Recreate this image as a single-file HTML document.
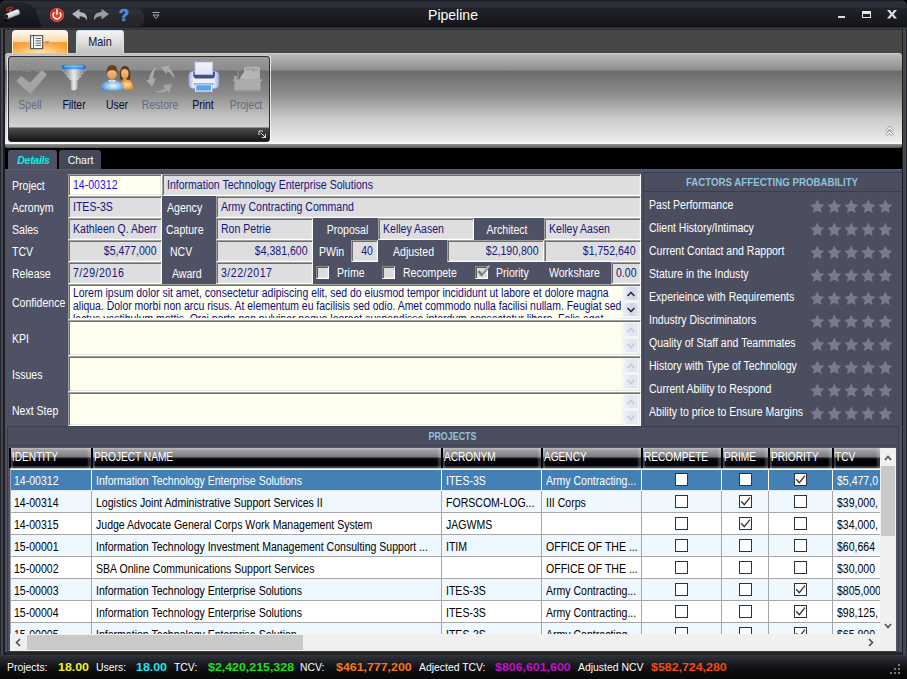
<!DOCTYPE html><html><head><meta charset="utf-8"><title>Pipeline</title><style>
*{margin:0;padding:0;box-sizing:border-box}
html,body{width:907px;height:679px;overflow:hidden;background:#000}
body{position:relative;font-family:"Liberation Sans",sans-serif;font-size:12.5px;letter-spacing:0;color:#fff;line-height:13px}
.a{position:absolute}
.t{position:absolute;white-space:pre;line-height:13px;height:13px;transform:scaleX(.843);transform-origin:0 50%}
.t.ce{transform-origin:50% 50%}
.x{display:inline-block;white-space:pre;transform:scaleX(.843);transform-origin:0 50%}
.r .x{transform-origin:100% 50%}
.f{position:absolute;background:#dedede;border:1px solid;border-color:#a0a0a0 #fff #fff #a0a0a0;box-shadow:inset 1px 1px 0 #6e6e6e,inset -1px -1px 0 #e6e6e6;color:#15157c;white-space:pre;overflow:hidden;line-height:13px;padding:4px 0 0 4px}
.f.r{text-align:right;padding-right:4px}
.iv{background:#fffff0}
.cb{position:absolute;width:13px;height:13px;background:#dcdcdc;border:1px solid;border-color:#8a8a8a #fff #fff #8a8a8a;box-shadow:inset 1px 1px 0 #5a5a5a,inset -1px -1px 0 #e6e6e6}
.b{font-weight:bold}
.hd{position:absolute;color:#8ec3dd;font-weight:bold;font-size:11px;letter-spacing:0;transform-origin:50% 50%;text-align:center;white-space:pre}
.row{position:absolute;left:10px;width:870px;height:22px}
.c{position:absolute;top:0;height:22px;border-right:1px solid #a6a6a6;border-bottom:1px solid #a6a6a6;color:#000;white-space:pre;overflow:hidden;padding:6px 0 0 4px;line-height:13px}
.sel .c{color:#fff;border-right-color:#fff;border-bottom-color:#dfe8f0;border-top:1px solid #fff}
.sel .c{padding-top:5px}
.sel .gc{top:3px}
.gc{position:absolute;width:13px;height:13px;border:1px solid #333;background:#fff;top:4px}
.hc{position:absolute;top:448px;height:20px;color:#fff;font-size:12px;padding:2.6px 0 0 1px;white-space:pre;overflow:hidden;line-height:13px;
 background:linear-gradient(#b8b8bc 0,#9c9c9e 3px,#7e7e7e 8.5px,#14141c 10.5px,#02020a 12px,#04040e 17.5px,#30323c 18.5px,#3a3c46 20px);border-left:2px solid #000;box-shadow:inset 2px 0 1px rgba(255,255,255,.22),inset -3px 0 2px rgba(255,255,255,.2)}
.sb{font-weight:bold;font-size:11px;transform:scaleX(1.125);transform-origin:0 50%}
.sl{font-size:11px;transform:scaleX(.946);transform-origin:0 50%}
</style></head><body>
<div class="a" style="left:0;top:0;width:907px;height:679px;background:#1e1e22;border-radius:6px 6px 4px 4px"></div>
<div class="a" style="left:0;top:0;width:907px;height:30px;background:linear-gradient(#13141b 0,#262834 1px,#2e303a 2px,#2b2d36 7.5px,#222329 8.5px,#1b1c22 17px,#141519 27px,#3e404a 28.3px,#2c2d33 29.3px,#3a3a3c 30px);border-radius:6px 6px 0 0"></div>
<svg class="a" style="left:0;top:0" width="170" height="29" viewBox="0 0 170 29"><defs><linearGradient id="pl" x1="0" y1="0" x2="0" y2="1"><stop offset="0" stop-color="#2f3037"/><stop offset="1" stop-color="#222328"/></linearGradient><linearGradient id="ab" x1="0" y1="0" x2="0" y2="1"><stop offset="0" stop-color="#23242c"/><stop offset="1" stop-color="#131418"/></linearGradient><linearGradient id="pp" x1="0" y1="0" x2="0" y2="1"><stop offset="0" stop-color="#ffffff"/><stop offset="1" stop-color="#b8bcc4"/></linearGradient><radialGradient id="pw" cx=".5" cy=".5" r=".5"><stop offset="0" stop-color="#e8503a"/><stop offset="1" stop-color="#c8200c"/></radialGradient></defs><path d="M36 8.5 H135 A9.5 9.5 0 0 1 135 27.5 H36 Z" fill="url(#pl)"/><path d="M1 2.5 H24 C36 3 38 20 43 27.5 H1 Z" fill="url(#ab)"/><g transform="rotate(-22 12 14)"><rect x="4.5" y="11.5" width="15.5" height="5.6" rx="2.2" fill="url(#pp)" stroke="#55585f" stroke-width=".5"/><ellipse cx="6" cy="14.3" rx="1.6" ry="2.2" fill="#1a1a1e"/><rect x="11" y="8.8" width="1.4" height="3" fill="#999"/><ellipse cx="11.7" cy="8.3" rx="3.4" ry="1.3" fill="none" stroke="#b42a20" stroke-width="1.1"/></g><circle cx="6" cy="20.3" r="1.5" fill="#050506"/><circle cx="57" cy="15" r="7.2" fill="url(#pw)"/><circle cx="57" cy="15" r="6.6" fill="none" stroke="#f29a86" stroke-width=".6" opacity=".7"/><path d="M54.3 12.2 A3.9 3.9 0 1 0 59.7 12.2" fill="none" stroke="#fff" stroke-width="1.5"/><path d="M57 9.3 V14.6" stroke="#fff" stroke-width="1.6"/><path d="M72 14 L79.5 9 V12 C85 12 87.5 15.5 87 20.5 C85.5 17.5 83.5 16.3 79.5 16.3 V19.5 Z" fill="#b4b6bc"/><path d="M109 14 L101.5 9 V12 C96 12 93.500 15.5 94 20.5 C95.5 17.5 97.5 16.3 101.5 16.3 V19.5 Z" fill="#9a9ca3"/><path d="M152.500 12.500 H159.500" stroke="#a8a8b0" stroke-width="1"/><path d="M153 15 L156 18.500 L159 15 Z" fill="none" stroke="#a8a8b0" stroke-width="1"/></svg>
<div class="a b" style="left:117px;top:5px;width:14px;text-align:center;font-size:16.5px;line-height:20px;color:#3f86e6;letter-spacing:0;text-shadow:0 0 1px #b8d8ff">?</div>
<div class="a" style="left:0;top:6px;width:906px;text-align:center;font-size:15px;letter-spacing:0;line-height:17px;color:#fff;transform:scaleX(.935)">Pipeline</div>
<div class="a" style="left:838px;top:15.5px;width:7px;height:2.5px;background:#dcdce8"></div>
<div class="a" style="left:862px;top:11px;width:9px;height:7px;border:1px solid #e8e8e8;border-top-width:3px"></div>
<svg class="a" style="left:886.6px;top:9.600px" width="10" height="9" viewBox="0 0 10 9"><path d="M0 0 H3 L5 2.800 L7 0 H10 L6.600 4.300 L10 8.600 H7 L5 5.800 L3 8.600 H0 L3.400 4.300 Z" fill="#dcdce4"/></svg>
<div class="a" style="left:5px;top:30px;width:897px;height:116px;background:#474747"></div>
<div class="a" style="left:12px;top:30px;width:56px;height:23px;border-radius:4px 4px 0 0;background:radial-gradient(ellipse 60% 55% at 50% 100%,rgba(255,236,196,.85),rgba(255,236,196,0) 100%),linear-gradient(#fffaf3 0,#fdead2 5px,#fbd8ac 10.5px,#f9a23e 11px,#f8992c 15px,#fbb040 23px);border:1px solid #fff3e2;border-bottom:0"></div>
<svg class="a" style="left:30px;top:35px" width="22" height="15" viewBox="0 0 22 15"><rect x="0.6" y="0.6" width="12" height="13" fill="#fff" stroke="#5a5a5a" stroke-width="1.2"/><path d="M3.600 1V13.500" stroke="#5a5a5a" stroke-width="1"/><path d="M5.500 3.500H11M5.500 5.800H11M5.500 8.100H11M5.500 10.400H11" stroke="#5a5a5a" stroke-width="1"/><path d="M14.300 6.300 H19.700 L17 9.300 Z" fill="#a39880"/></svg>
<div class="a" style="left:76px;top:30px;width:48px;height:24px;border-radius:3px 3px 0 0;background:linear-gradient(#f4f4f4,#d8d8d8 60%,#bdbdbd);border:1px solid #cfe4ee;border-bottom:0"></div>
<div class="t" style="left:76px;top:36px;width:48px;text-align:center;color:#10103c;font-size:12.6px;transform:scaleX(.86);transform-origin:50% 50%">Main</div>
<div class="a" style="left:5px;top:53px;width:897px;height:95px;border-radius:3px;background:linear-gradient(#d2d2d2 0,#b9b9b9 2px,#8e8e8e 17px,#6c6c6c 18px,#8a8a8a 40px,#c9c9c9 65px,#ececec 88px,#fafafa 90.5px,#8c8c8c 91.5px,#585858 95px)"></div>
<div class="a" style="left:7px;top:55px;width:264px;height:89px;border-radius:4px;border:1.5px solid rgba(255,255,255,.75);border-top-color:rgba(255,255,255,.25)"></div>
<div class="a" style="left:8px;top:56px;width:262px;height:86px;border-radius:3px;border:1px solid #2e2e2e;background:linear-gradient(#9a9a9a 0,#8c8c8c 13px,#6e6e6e 14px,#8a8a8a 36px,#c4c4c4 60px,#d4d4d4 70px,#4c4c4c 71px,#151515 84px)"></div>
<svg class="a" style="left:258px;top:130px" width="9" height="9" viewBox="0 0 9 9"><path d="M1 5V1H5" fill="none" stroke="#ddd" stroke-width="1"/><path d="M3 3L7.5 7.5M7.5 4V7.5H4" fill="none" stroke="#ddd" stroke-width="1"/></svg>
<svg class="a" style="left:885px;top:126px" width="9" height="11" viewBox="0 0 9 11"><path d="M1 5L4.5 1.5L8 5M1 9.5L4.5 6L8 9.5" fill="none" stroke="#666" stroke-width="2.4"/><path d="M1 5L4.5 1.5L8 5M1 9.5L4.5 6L8 9.5" fill="none" stroke="#fff" stroke-width="1.5"/></svg>
<div class="t" style="left:0px;top:99px;width:60px;text-align:center;color:#666a80;font-size:12.6px;transform:scaleX(.83);transform-origin:50% 50%">Spell</div>
<div class="t" style="left:44px;top:99px;width:60px;text-align:center;color:#08082c;font-size:12.6px;transform:scaleX(.83);transform-origin:50% 50%">Filter</div>
<div class="t" style="left:87px;top:99px;width:60px;text-align:center;color:#08082c;font-size:12.6px;transform:scaleX(.83);transform-origin:50% 50%">User</div>
<div class="t" style="left:130px;top:99px;width:60px;text-align:center;color:#666a80;font-size:12.6px;transform:scaleX(.83);transform-origin:50% 50%">Restore</div>
<div class="t" style="left:173px;top:99px;width:60px;text-align:center;color:#08082c;font-size:12.6px;transform:scaleX(.83);transform-origin:50% 50%">Print</div>
<div class="t" style="left:216px;top:99px;width:60px;text-align:center;color:#666a80;font-size:12.6px;transform:scaleX(.83);transform-origin:50% 50%">Project</div>
<svg class="a" style="left:10px;top:58px" width="40" height="40" viewBox="0 0 40 40"><text x="6.300" y="13.800" font-family="Liberation Sans, sans-serif" font-size="12.300" fill="#8b8b8b" opacity=".8">ABC</text><path d="M6.200 23.200 L11.200 17.900 L20 24.700 L32 11.800 L37 16.500 L20.300 35.900 Z" fill="#a4a4a4"/></svg>
<svg class="a" style="left:54px;top:58px" width="40" height="40" viewBox="0 0 40 40"><defs><linearGradient id="fg" x1="0" x2="1"><stop offset="0" stop-color="#7a7a7a"/><stop offset=".25" stop-color="#a8a8a8"/><stop offset=".5" stop-color="#ececec"/><stop offset=".75" stop-color="#a8a8a8"/><stop offset="1" stop-color="#7a7a7a"/></linearGradient><linearGradient id="fs" x1="0" x2="1"><stop offset="0" stop-color="#a4a4a4"/><stop offset=".45" stop-color="#f0f0f0"/><stop offset="1" stop-color="#b0b0b0"/></linearGradient><linearGradient id="fb" x1="0" x2="1"><stop offset="0" stop-color="#1e6fd0"/><stop offset=".5" stop-color="#48acf2"/><stop offset="1" stop-color="#1e6fd0"/></linearGradient></defs><path d="M7.800 10.500 H32 L23.500 22.600 H16.800 Z" fill="url(#fg)"/><path d="M8 11.500 L16.500 22.300 M31.800 11.500 L23.700 22.300" stroke="#fff" stroke-width=".7" stroke-dasharray="2.500 1.500" opacity=".8"/><path d="M16.800 22 H23.500 V31 L20 32.600 L16.800 31.800 Z" fill="url(#fs)"/><rect x="7.600" y="6.800" width="24.400" height="4.400" rx="2.200" fill="url(#fb)"/><rect x="10" y="7.600" width="19.500" height="1.600" rx=".8" fill="#7cc8fa" opacity=".7"/></svg>
<svg class="a" style="left:97px;top:58px" width="40" height="40" viewBox="0 0 40 40"><defs><radialGradient id="ub" cx=".55" cy=".55" r=".6"><stop offset="0" stop-color="#eef8ff"/><stop offset=".45" stop-color="#a4d0f0"/><stop offset="1" stop-color="#3f88d6"/></radialGradient><radialGradient id="uo" cx=".55" cy=".5" r=".6"><stop offset="0" stop-color="#fff4e0"/><stop offset=".45" stop-color="#f8b860"/><stop offset="1" stop-color="#e8841a"/></radialGradient><linearGradient id="sk" x1="0" y1="0" x2="0" y2="1"><stop offset="0" stop-color="#f6c890"/><stop offset="1" stop-color="#e09848"/></linearGradient></defs><path d="M23 31.500 C22.500 25 25 21.800 29.500 21.800 C34 21.800 36.300 25 35.900 31.500 Z" fill="url(#uo)"/><path d="M23 21.600 C22.200 14 23.500 8 28 8 C32.500 8 33.800 14 33 21.600 Z" fill="#5e3418"/><rect x="26.300" y="19" width="3.200" height="3.600" fill="#e09848"/><ellipse cx="27.800" cy="15.800" rx="3.800" ry="5" fill="url(#sk)"/><path d="M24 13.500 C25 10.500 30.500 10.500 32 13.500 C30 11.800 26 11.800 24 13.500Z" fill="#c89050"/><path d="M4.100 32.600 C3.600 25.500 7 22 15 22 C23 22 26.600 25.500 26.200 32.600 Z" fill="url(#ub)"/><path d="M11.300 22 H18.800 L17.800 23.800 H12.300 Z" fill="#f4f8fc"/><rect x="12.800" y="18.500" width="4.400" height="4" fill="#d88c40"/><ellipse cx="15" cy="15.800" rx="4.800" ry="5.400" fill="url(#sk)"/><path d="M9.900 15.500 C9 9 12 6.800 15.500 7 C19.500 7 21 10.500 20 15.500 C19 12.800 17.500 12 15 12.300 C12.500 12 11 13 9.900 15.500Z" fill="#6a4220"/></svg>
<svg class="a" style="left:140px;top:58px" width="40" height="40" viewBox="0 0 40 40"><g fill="#b0b0b0" opacity=".88"><path d="M16.500 8.800 C12.500 11.500 9.500 16 9 21.800 L6.200 22.400 L12.400 28.800 L15.900 20.300 L13.300 20.900 C13.300 16.500 14.500 12.500 16.500 8.800 Z"/><path d="M20.900 9.400 L30 7 L28.800 9.800 C32.500 13 34.500 17 34.700 21.800 C33 18 30.500 15 27.600 13.300 L26.500 15.900 Z"/><path d="M14.100 32.400 C18 33.500 22 33 25 30.500 L22.900 27.100 L31.800 25.900 L29.400 34.700 L27.300 32.800 C23.500 35.500 18 35 14.100 32.400 Z" opacity=".85"/></g></svg>
<svg class="a" style="left:183px;top:58px" width="40" height="40" viewBox="0 0 40 40"><defs><linearGradient id="pg" x1="0" x2="1"><stop offset="0" stop-color="#a4b6e2"/><stop offset=".18" stop-color="#eef1f9"/><stop offset=".82" stop-color="#eef1f9"/><stop offset="1" stop-color="#9cb0e0"/></linearGradient><linearGradient id="pt" x1="0" y1="0" x2="0" y2="1"><stop offset="0" stop-color="#f2f4fb"/><stop offset="1" stop-color="#dfe5f5"/></linearGradient></defs><rect x="5.900" y="13.200" width="30" height="17.400" rx="4.500" fill="url(#pg)" stroke="#8ea4dc" stroke-width=".6"/><path d="M10.300 13.800 H32 V17.500 C32 19.500 30.500 20.600 28.500 20.600 H13.800 C11.800 20.600 10.300 19.500 10.300 17.500 Z" fill="#484c88"/><rect x="12" y="4.100" width="17.700" height="12.400" fill="url(#pt)" stroke="#b4c2ea" stroke-width=".8"/><rect x="11" y="25.600" width="19.400" height="1" fill="#484c88"/><rect x="12" y="26.200" width="17.400" height="7.600" fill="#fff" stroke="#8ea4dc" stroke-width=".5"/><rect x="13.200" y="27.200" width="15" height="5.400" fill="#56a6ea"/></svg>
<svg class="a" style="left:226px;top:58px" width="40" height="40" viewBox="0 0 40 40"><rect x="18" y="8.800" width="16" height="13" rx="1.800" fill="#b4b4b4"/><rect x="19.600" y="10.400" width="12.800" height="10" fill="#a0a0a0"/><path d="M24 20 L30 11.500 L32 13 V20 Z" fill="#b2b2b2"/><path d="M13.800 21.500 C15 17 19 12 23 11.800 C27 12 30 17 31 21.500 Z" fill="#b6b6b6"/><rect x="11.300" y="11.800" width="1.400" height="10" fill="#8e8e8e"/><rect x="8.300" y="18" width="2.400" height="3.500" fill="#acacac"/><path d="M7 21.200 H36 V23 H34.600 V32 H8.400 V23 H7 Z" fill="#ababab"/><rect x="8.400" y="32" width="26.200" height="1.600" fill="#a0a0a0" opacity=".6"/></svg>
<div class="a" style="left:5px;top:148px;width:897px;height:21px;background:#000"></div>
<div class="a" style="left:8px;top:150px;width:49px;height:21px;background:#4f5264;border-radius:3px 3px 0 0"></div>
<div class="a" style="left:59px;top:150px;width:42px;height:19px;background:#444756;border-radius:3px 3px 0 0"></div>
<div class="t" style="left:9px;top:153.500px;width:49px;text-align:center;color:#00f2ec;font-weight:bold;font-style:italic;font-size:10.5px;letter-spacing:-0.3px;transform:none">Details</div>
<div class="t" style="left:59px;top:153.600px;width:43px;text-align:center;color:#fff;font-size:10.5px;letter-spacing:0;transform:none">Chart</div>
<div class="a" style="left:5px;top:169px;width:897px;height:484px;background:#4f5264;border-top:1px solid #585b6e"></div>
<div class="t" style="left:12px;top:180px;">Project</div>
<div class="t" style="left:12px;top:202px;">Acronym</div>
<div class="t" style="left:12px;top:224px;">Sales</div>
<div class="t" style="left:12px;top:246px;">TCV</div>
<div class="t" style="left:12px;top:268px;">Release</div>
<div class="f iv" style="left:68px;top:174px;width:94px;height:22px;color:#1818f0"><span class="x">14-00312</span></div>
<div class="f " style="left:162px;top:174px;width:479px;height:22px;"><span class="x">Information Technology Enterprise Solutions</span></div>
<div class="f " style="left:68px;top:196px;width:94px;height:22px;"><span class="x">ITES-3S</span></div>
<div class="t" style="left:167px;top:202px;">Agency</div>
<div class="f " style="left:216px;top:196px;width:425px;height:22px;"><span class="x">Army Contracting Command</span></div>
<div class="f " style="left:68px;top:218px;width:94px;height:22px;"><span class="x">Kathleen Q. Aberr</span></div>
<div class="t" style="left:166px;top:224px;">Capture</div>
<div class="f " style="left:216px;top:218px;width:97px;height:22px;"><span class="x">Ron Petrie</span></div>
<div class="t ce" style="left:315px;top:223.5px;width:65px;text-align:center;">Proposal</div>
<div class="f " style="left:378px;top:218px;width:96px;height:22px;"><span class="x">Kelley Aasen</span></div>
<div class="t ce" style="left:472px;top:223.5px;width:70px;text-align:center;">Architect</div>
<div class="f " style="left:544px;top:218px;width:97px;height:22px;"><span class="x">Kelley Aasen</span></div>
<div class="f r" style="left:68px;top:240px;width:94px;height:22px;"><span class="x">$5,477,000</span></div>
<div class="t" style="left:170px;top:246px;">NCV</div>
<div class="f r" style="left:216px;top:240px;width:97px;height:22px;"><span class="x">$4,381,600</span></div>
<div class="t" style="left:319px;top:246px;">PWin</div>
<div class="f r" style="left:351px;top:240px;width:27px;height:22px;"><span class="x">40</span></div>
<div class="t ce" style="left:379px;top:246.4px;width:69px;text-align:center;">Adjusted</div>
<div class="f r" style="left:447px;top:240px;width:97px;height:22px;"><span class="x">$2,190,800</span></div>
<div class="f r" style="left:544px;top:240px;width:97px;height:22px;"><span class="x">$1,752,640</span></div>
<div class="f " style="left:68px;top:262px;width:94px;height:22px;letter-spacing:.6px"><span class="x">7/29/2016</span></div>
<div class="t" style="left:172px;top:268px;">Award</div>
<div class="f " style="left:216px;top:262px;width:97px;height:22px;letter-spacing:.6px"><span class="x">3/22/2017</span></div>
<div class="cb" style="left:316px;top:266px"></div>
<div class="t" style="left:337px;top:267px;">Prime</div>
<div class="cb" style="left:382px;top:266px"></div>
<div class="t" style="left:403px;top:267px;">Recompete</div>
<div class="cb" style="left:475px;top:266px"></div>
<svg class="a" style="left:476px;top:264px" width="16" height="14" viewBox="0 0 16 14"><path d="M2.500 7 L5.500 10.800 L12.500 3" fill="none" stroke="#7a7a7a" stroke-width="2.6"/><path d="M6 9 L13.500 1.500" stroke="#c4c4c4" stroke-width="1.2"/></svg>
<div class="t" style="left:496px;top:267px;">Priority</div>
<div class="t" style="left:549px;top:267.4px;">Workshare</div>
<div class="f " style="left:611px;top:262px;width:30px;height:22px;"><span class="x">0.00</span></div>
<div class="t" style="left:12px;top:297px;">Confidence</div>
<div class="f iv" style="left:68px;top:284px;width:573px;height:36px;color:#0c0c80;padding:2px 0 0 4px"><span class="x" style="transform:scaleX(.836)">Lorem ipsum dolor sit amet, consectetur adipiscing elit, sed do eiusmod tempor incididunt ut labore et dolore magna
aliqua. Dolor morbi non arcu risus. At elementum eu facilisis sed odio. Amet commodo nulla facilisi nullam. Feugiat sed
lectus vestibulum mattis. Orci porta non pulvinar neque laoreet suspendisse interdum consectetur libero. Felis eget</span></div>
<div class="a" style="left:70px;top:318px;width:552px;height:1px;background:#fbfbea"></div>
<div class="a" style="left:622px;top:286px;width:17px;height:32px;background:#f4f5ee"></div>
<div class="a" style="left:623px;top:286px;width:15.5px;height:15px;background:linear-gradient(90deg,#e9edf6,#cdd6e7 55%,#dde3ef);border:1px solid #f2f4f9;border-radius:2px"></div>
<svg class="a" style="left:626px;top:291px" width="10" height="6" viewBox="0 0 10 6"><path d="M1.500 5L5 1.500L8.500 5" fill="none" stroke="#202020" stroke-width="1.4"/></svg>
<div class="a" style="left:623px;top:302px;width:15.5px;height:15px;background:linear-gradient(90deg,#e9edf6,#cdd6e7 55%,#dde3ef);border:1px solid #f2f4f9;border-radius:2px"></div>
<svg class="a" style="left:626px;top:307px" width="10" height="6" viewBox="0 0 10 6"><path d="M1.500 1L5 4.500L8.500 1" fill="none" stroke="#202020" stroke-width="1.4"/></svg>
<div class="t" style="left:12px;top:333px;">KPI</div>
<div class="f iv" style="left:68px;top:320px;width:573px;height:36px;color:#0c0c80;padding:2px 0 0 4px"><span class="x" style="transform:scaleX(.836)"></span></div>
<div class="a" style="left:622px;top:322px;width:17px;height:32px;background:#f4f5ee"></div>
<div class="a" style="left:623px;top:322px;width:15.5px;height:15px;background:linear-gradient(90deg,#eef0f6,#dfe4ee 55%,#e8ebf2);border:1px solid #f5f6f8;border-radius:2px"></div>
<svg class="a" style="left:626px;top:327px" width="10" height="6" viewBox="0 0 10 6"><path d="M1.500 5L5 1.500L8.500 5" fill="none" stroke="#c2c8d6" stroke-width="1.4"/></svg>
<div class="a" style="left:623px;top:338px;width:15.5px;height:15px;background:linear-gradient(90deg,#eef0f6,#dfe4ee 55%,#e8ebf2);border:1px solid #f5f6f8;border-radius:2px"></div>
<svg class="a" style="left:626px;top:343px" width="10" height="6" viewBox="0 0 10 6"><path d="M1.500 1L5 4.500L8.500 1" fill="none" stroke="#c2c8d6" stroke-width="1.4"/></svg>
<div class="t" style="left:12px;top:369px;">Issues</div>
<div class="f iv" style="left:68px;top:356px;width:573px;height:36px;color:#0c0c80;padding:2px 0 0 4px"><span class="x" style="transform:scaleX(.836)"></span></div>
<div class="a" style="left:622px;top:358px;width:17px;height:32px;background:#f4f5ee"></div>
<div class="a" style="left:623px;top:358px;width:15.5px;height:15px;background:linear-gradient(90deg,#eef0f6,#dfe4ee 55%,#e8ebf2);border:1px solid #f5f6f8;border-radius:2px"></div>
<svg class="a" style="left:626px;top:363px" width="10" height="6" viewBox="0 0 10 6"><path d="M1.500 5L5 1.500L8.500 5" fill="none" stroke="#c2c8d6" stroke-width="1.4"/></svg>
<div class="a" style="left:623px;top:374px;width:15.5px;height:15px;background:linear-gradient(90deg,#eef0f6,#dfe4ee 55%,#e8ebf2);border:1px solid #f5f6f8;border-radius:2px"></div>
<svg class="a" style="left:626px;top:379px" width="10" height="6" viewBox="0 0 10 6"><path d="M1.500 1L5 4.500L8.500 1" fill="none" stroke="#c2c8d6" stroke-width="1.4"/></svg>
<div class="t" style="left:12px;top:405px;">Next Step</div>
<div class="f iv" style="left:68px;top:392px;width:573px;height:34px;color:#0c0c80;padding:2px 0 0 4px"><span class="x" style="transform:scaleX(.836)"></span></div>
<div class="a" style="left:622px;top:394px;width:17px;height:30px;background:#f4f5ee"></div>
<div class="a" style="left:623px;top:394px;width:15.5px;height:15px;background:linear-gradient(90deg,#eef0f6,#dfe4ee 55%,#e8ebf2);border:1px solid #f5f6f8;border-radius:2px"></div>
<svg class="a" style="left:626px;top:399px" width="10" height="6" viewBox="0 0 10 6"><path d="M1.500 5L5 1.500L8.500 5" fill="none" stroke="#c2c8d6" stroke-width="1.4"/></svg>
<div class="a" style="left:623px;top:410px;width:15.5px;height:15px;background:linear-gradient(90deg,#eef0f6,#dfe4ee 55%,#e8ebf2);border:1px solid #f5f6f8;border-radius:2px"></div>
<svg class="a" style="left:626px;top:415px" width="10" height="6" viewBox="0 0 10 6"><path d="M1.500 1L5 4.500L8.500 1" fill="none" stroke="#c2c8d6" stroke-width="1.4"/></svg>
<div class="a" style="left:643px;top:172px;width:259px;height:254px;background:#4b4e5f;border-left:1px solid #3b3e4c;border-top:1px solid #3b3e4c"></div>
<div class="a" style="left:644px;top:191px;width:257px;height:1px;background:#3b3e4c"></div>
<div class="hd" style="left:645px;top:176px;width:254px;line-height:13px;transform:scaleX(.88)">FACTORS AFFECTING PROBABILITY</div>
<div class="t" style="left:649px;top:199px;">Past Performance</div>
<svg class="a" style="left:810.1px;top:199.0px" width="14.6" height="14.6" viewBox="0 0 14 14"><path d="M7 0.5 L9.1 4.9 L13.7 5.5 L10.3 8.8 L11.2 13.4 L7 11.2 L2.8 13.4 L3.7 8.8 L0.3 5.5 L4.9 4.9 Z" fill="#797b86"/></svg>
<svg class="a" style="left:827.1px;top:199.0px" width="14.6" height="14.6" viewBox="0 0 14 14"><path d="M7 0.5 L9.1 4.9 L13.7 5.5 L10.3 8.8 L11.2 13.4 L7 11.2 L2.8 13.4 L3.7 8.8 L0.3 5.5 L4.9 4.9 Z" fill="#797b86"/></svg>
<svg class="a" style="left:844.1px;top:199.0px" width="14.6" height="14.6" viewBox="0 0 14 14"><path d="M7 0.5 L9.1 4.9 L13.7 5.5 L10.3 8.8 L11.2 13.4 L7 11.2 L2.8 13.4 L3.7 8.8 L0.3 5.5 L4.9 4.9 Z" fill="#797b86"/></svg>
<svg class="a" style="left:861.1px;top:199.0px" width="14.6" height="14.6" viewBox="0 0 14 14"><path d="M7 0.5 L9.1 4.9 L13.7 5.5 L10.3 8.8 L11.2 13.4 L7 11.2 L2.8 13.4 L3.7 8.8 L0.3 5.5 L4.9 4.9 Z" fill="#797b86"/></svg>
<svg class="a" style="left:878.1px;top:199.0px" width="14.6" height="14.6" viewBox="0 0 14 14"><path d="M7 0.5 L9.1 4.9 L13.7 5.5 L10.3 8.8 L11.2 13.4 L7 11.2 L2.8 13.4 L3.7 8.8 L0.3 5.5 L4.9 4.9 Z" fill="#797b86"/></svg>
<div class="t" style="left:649px;top:222px;">Client History/Intimacy</div>
<svg class="a" style="left:810.1px;top:222.0px" width="14.6" height="14.6" viewBox="0 0 14 14"><path d="M7 0.5 L9.1 4.9 L13.7 5.5 L10.3 8.8 L11.2 13.4 L7 11.2 L2.8 13.4 L3.7 8.8 L0.3 5.5 L4.9 4.9 Z" fill="#797b86"/></svg>
<svg class="a" style="left:827.1px;top:222.0px" width="14.6" height="14.6" viewBox="0 0 14 14"><path d="M7 0.5 L9.1 4.9 L13.7 5.5 L10.3 8.8 L11.2 13.4 L7 11.2 L2.8 13.4 L3.7 8.8 L0.3 5.5 L4.9 4.9 Z" fill="#797b86"/></svg>
<svg class="a" style="left:844.1px;top:222.0px" width="14.6" height="14.6" viewBox="0 0 14 14"><path d="M7 0.5 L9.1 4.9 L13.7 5.5 L10.3 8.8 L11.2 13.4 L7 11.2 L2.8 13.4 L3.7 8.8 L0.3 5.5 L4.9 4.9 Z" fill="#797b86"/></svg>
<svg class="a" style="left:861.1px;top:222.0px" width="14.6" height="14.6" viewBox="0 0 14 14"><path d="M7 0.5 L9.1 4.9 L13.7 5.5 L10.3 8.8 L11.2 13.4 L7 11.2 L2.8 13.4 L3.7 8.8 L0.3 5.5 L4.9 4.9 Z" fill="#797b86"/></svg>
<svg class="a" style="left:878.1px;top:222.0px" width="14.6" height="14.6" viewBox="0 0 14 14"><path d="M7 0.5 L9.1 4.9 L13.7 5.5 L10.3 8.8 L11.2 13.4 L7 11.2 L2.8 13.4 L3.7 8.8 L0.3 5.5 L4.9 4.9 Z" fill="#797b86"/></svg>
<div class="t" style="left:649px;top:245px;">Current Contact and Rapport</div>
<svg class="a" style="left:810.1px;top:245.0px" width="14.6" height="14.6" viewBox="0 0 14 14"><path d="M7 0.5 L9.1 4.9 L13.7 5.5 L10.3 8.8 L11.2 13.4 L7 11.2 L2.8 13.4 L3.7 8.8 L0.3 5.5 L4.9 4.9 Z" fill="#797b86"/></svg>
<svg class="a" style="left:827.1px;top:245.0px" width="14.6" height="14.6" viewBox="0 0 14 14"><path d="M7 0.5 L9.1 4.9 L13.7 5.5 L10.3 8.8 L11.2 13.4 L7 11.2 L2.8 13.4 L3.7 8.8 L0.3 5.5 L4.9 4.9 Z" fill="#797b86"/></svg>
<svg class="a" style="left:844.1px;top:245.0px" width="14.6" height="14.6" viewBox="0 0 14 14"><path d="M7 0.5 L9.1 4.9 L13.7 5.5 L10.3 8.8 L11.2 13.4 L7 11.2 L2.8 13.4 L3.7 8.8 L0.3 5.5 L4.9 4.9 Z" fill="#797b86"/></svg>
<svg class="a" style="left:861.1px;top:245.0px" width="14.6" height="14.6" viewBox="0 0 14 14"><path d="M7 0.5 L9.1 4.9 L13.7 5.5 L10.3 8.8 L11.2 13.4 L7 11.2 L2.8 13.4 L3.7 8.8 L0.3 5.5 L4.9 4.9 Z" fill="#797b86"/></svg>
<svg class="a" style="left:878.1px;top:245.0px" width="14.6" height="14.6" viewBox="0 0 14 14"><path d="M7 0.5 L9.1 4.9 L13.7 5.5 L10.3 8.8 L11.2 13.4 L7 11.2 L2.8 13.4 L3.7 8.8 L0.3 5.5 L4.9 4.9 Z" fill="#797b86"/></svg>
<div class="t" style="left:649px;top:268px;">Stature in the Industy</div>
<svg class="a" style="left:810.1px;top:268.0px" width="14.6" height="14.6" viewBox="0 0 14 14"><path d="M7 0.5 L9.1 4.9 L13.7 5.5 L10.3 8.8 L11.2 13.4 L7 11.2 L2.8 13.4 L3.7 8.8 L0.3 5.5 L4.9 4.9 Z" fill="#797b86"/></svg>
<svg class="a" style="left:827.1px;top:268.0px" width="14.6" height="14.6" viewBox="0 0 14 14"><path d="M7 0.5 L9.1 4.9 L13.7 5.5 L10.3 8.8 L11.2 13.4 L7 11.2 L2.8 13.4 L3.7 8.8 L0.3 5.5 L4.9 4.9 Z" fill="#797b86"/></svg>
<svg class="a" style="left:844.1px;top:268.0px" width="14.6" height="14.6" viewBox="0 0 14 14"><path d="M7 0.5 L9.1 4.9 L13.7 5.5 L10.3 8.8 L11.2 13.4 L7 11.2 L2.8 13.4 L3.7 8.8 L0.3 5.5 L4.9 4.9 Z" fill="#797b86"/></svg>
<svg class="a" style="left:861.1px;top:268.0px" width="14.6" height="14.6" viewBox="0 0 14 14"><path d="M7 0.5 L9.1 4.9 L13.7 5.5 L10.3 8.8 L11.2 13.4 L7 11.2 L2.8 13.4 L3.7 8.8 L0.3 5.5 L4.9 4.9 Z" fill="#797b86"/></svg>
<svg class="a" style="left:878.1px;top:268.0px" width="14.6" height="14.6" viewBox="0 0 14 14"><path d="M7 0.5 L9.1 4.9 L13.7 5.5 L10.3 8.8 L11.2 13.4 L7 11.2 L2.8 13.4 L3.7 8.8 L0.3 5.5 L4.9 4.9 Z" fill="#797b86"/></svg>
<div class="t" style="left:649px;top:291px;">Experieince with Requirements</div>
<svg class="a" style="left:810.1px;top:291.0px" width="14.6" height="14.6" viewBox="0 0 14 14"><path d="M7 0.5 L9.1 4.9 L13.7 5.5 L10.3 8.8 L11.2 13.4 L7 11.2 L2.8 13.4 L3.7 8.8 L0.3 5.5 L4.9 4.9 Z" fill="#797b86"/></svg>
<svg class="a" style="left:827.1px;top:291.0px" width="14.6" height="14.6" viewBox="0 0 14 14"><path d="M7 0.5 L9.1 4.9 L13.7 5.5 L10.3 8.8 L11.2 13.4 L7 11.2 L2.8 13.4 L3.7 8.8 L0.3 5.5 L4.9 4.9 Z" fill="#797b86"/></svg>
<svg class="a" style="left:844.1px;top:291.0px" width="14.6" height="14.6" viewBox="0 0 14 14"><path d="M7 0.5 L9.1 4.9 L13.7 5.5 L10.3 8.8 L11.2 13.4 L7 11.2 L2.8 13.4 L3.7 8.8 L0.3 5.5 L4.9 4.9 Z" fill="#797b86"/></svg>
<svg class="a" style="left:861.1px;top:291.0px" width="14.6" height="14.6" viewBox="0 0 14 14"><path d="M7 0.5 L9.1 4.9 L13.7 5.5 L10.3 8.8 L11.2 13.4 L7 11.2 L2.8 13.4 L3.7 8.8 L0.3 5.5 L4.9 4.9 Z" fill="#797b86"/></svg>
<svg class="a" style="left:878.1px;top:291.0px" width="14.6" height="14.6" viewBox="0 0 14 14"><path d="M7 0.5 L9.1 4.9 L13.7 5.5 L10.3 8.8 L11.2 13.4 L7 11.2 L2.8 13.4 L3.7 8.8 L0.3 5.5 L4.9 4.9 Z" fill="#797b86"/></svg>
<div class="t" style="left:649px;top:314px;">Industry Discriminators</div>
<svg class="a" style="left:810.1px;top:314.0px" width="14.6" height="14.6" viewBox="0 0 14 14"><path d="M7 0.5 L9.1 4.9 L13.7 5.5 L10.3 8.8 L11.2 13.4 L7 11.2 L2.8 13.4 L3.7 8.8 L0.3 5.5 L4.9 4.9 Z" fill="#797b86"/></svg>
<svg class="a" style="left:827.1px;top:314.0px" width="14.6" height="14.6" viewBox="0 0 14 14"><path d="M7 0.5 L9.1 4.9 L13.7 5.5 L10.3 8.8 L11.2 13.4 L7 11.2 L2.8 13.4 L3.7 8.8 L0.3 5.5 L4.9 4.9 Z" fill="#797b86"/></svg>
<svg class="a" style="left:844.1px;top:314.0px" width="14.6" height="14.6" viewBox="0 0 14 14"><path d="M7 0.5 L9.1 4.9 L13.7 5.5 L10.3 8.8 L11.2 13.4 L7 11.2 L2.8 13.4 L3.7 8.8 L0.3 5.5 L4.9 4.9 Z" fill="#797b86"/></svg>
<svg class="a" style="left:861.1px;top:314.0px" width="14.6" height="14.6" viewBox="0 0 14 14"><path d="M7 0.5 L9.1 4.9 L13.7 5.5 L10.3 8.8 L11.2 13.4 L7 11.2 L2.8 13.4 L3.7 8.8 L0.3 5.5 L4.9 4.9 Z" fill="#797b86"/></svg>
<svg class="a" style="left:878.1px;top:314.0px" width="14.6" height="14.6" viewBox="0 0 14 14"><path d="M7 0.5 L9.1 4.9 L13.7 5.5 L10.3 8.8 L11.2 13.4 L7 11.2 L2.8 13.4 L3.7 8.8 L0.3 5.5 L4.9 4.9 Z" fill="#797b86"/></svg>
<div class="t" style="left:649px;top:337px;">Quality of Staff and Teammates</div>
<svg class="a" style="left:810.1px;top:337.0px" width="14.6" height="14.6" viewBox="0 0 14 14"><path d="M7 0.5 L9.1 4.9 L13.7 5.5 L10.3 8.8 L11.2 13.4 L7 11.2 L2.8 13.4 L3.7 8.8 L0.3 5.5 L4.9 4.9 Z" fill="#797b86"/></svg>
<svg class="a" style="left:827.1px;top:337.0px" width="14.6" height="14.6" viewBox="0 0 14 14"><path d="M7 0.5 L9.1 4.9 L13.7 5.5 L10.3 8.8 L11.2 13.4 L7 11.2 L2.8 13.4 L3.7 8.8 L0.3 5.5 L4.9 4.9 Z" fill="#797b86"/></svg>
<svg class="a" style="left:844.1px;top:337.0px" width="14.6" height="14.6" viewBox="0 0 14 14"><path d="M7 0.5 L9.1 4.9 L13.7 5.5 L10.3 8.8 L11.2 13.4 L7 11.2 L2.8 13.4 L3.7 8.8 L0.3 5.5 L4.9 4.9 Z" fill="#797b86"/></svg>
<svg class="a" style="left:861.1px;top:337.0px" width="14.6" height="14.6" viewBox="0 0 14 14"><path d="M7 0.5 L9.1 4.9 L13.7 5.5 L10.3 8.8 L11.2 13.4 L7 11.2 L2.8 13.4 L3.7 8.8 L0.3 5.5 L4.9 4.9 Z" fill="#797b86"/></svg>
<svg class="a" style="left:878.1px;top:337.0px" width="14.6" height="14.6" viewBox="0 0 14 14"><path d="M7 0.5 L9.1 4.9 L13.7 5.5 L10.3 8.8 L11.2 13.4 L7 11.2 L2.8 13.4 L3.7 8.8 L0.3 5.5 L4.9 4.9 Z" fill="#797b86"/></svg>
<div class="t" style="left:649px;top:360px;">History with Type of Technology</div>
<svg class="a" style="left:810.1px;top:360.0px" width="14.6" height="14.6" viewBox="0 0 14 14"><path d="M7 0.5 L9.1 4.9 L13.7 5.5 L10.3 8.8 L11.2 13.4 L7 11.2 L2.8 13.4 L3.7 8.8 L0.3 5.5 L4.9 4.9 Z" fill="#797b86"/></svg>
<svg class="a" style="left:827.1px;top:360.0px" width="14.6" height="14.6" viewBox="0 0 14 14"><path d="M7 0.5 L9.1 4.9 L13.7 5.5 L10.3 8.8 L11.2 13.4 L7 11.2 L2.8 13.4 L3.7 8.8 L0.3 5.5 L4.9 4.9 Z" fill="#797b86"/></svg>
<svg class="a" style="left:844.1px;top:360.0px" width="14.6" height="14.6" viewBox="0 0 14 14"><path d="M7 0.5 L9.1 4.9 L13.7 5.5 L10.3 8.8 L11.2 13.4 L7 11.2 L2.8 13.4 L3.7 8.8 L0.3 5.5 L4.9 4.9 Z" fill="#797b86"/></svg>
<svg class="a" style="left:861.1px;top:360.0px" width="14.6" height="14.6" viewBox="0 0 14 14"><path d="M7 0.5 L9.1 4.9 L13.7 5.5 L10.3 8.8 L11.2 13.4 L7 11.2 L2.8 13.4 L3.7 8.8 L0.3 5.5 L4.9 4.9 Z" fill="#797b86"/></svg>
<svg class="a" style="left:878.1px;top:360.0px" width="14.6" height="14.6" viewBox="0 0 14 14"><path d="M7 0.5 L9.1 4.9 L13.7 5.5 L10.3 8.8 L11.2 13.4 L7 11.2 L2.8 13.4 L3.7 8.8 L0.3 5.5 L4.9 4.9 Z" fill="#797b86"/></svg>
<div class="t" style="left:649px;top:383px;">Current Ability to Respond</div>
<svg class="a" style="left:810.1px;top:383.0px" width="14.6" height="14.6" viewBox="0 0 14 14"><path d="M7 0.5 L9.1 4.9 L13.7 5.5 L10.3 8.8 L11.2 13.4 L7 11.2 L2.8 13.4 L3.7 8.8 L0.3 5.5 L4.9 4.9 Z" fill="#797b86"/></svg>
<svg class="a" style="left:827.1px;top:383.0px" width="14.6" height="14.6" viewBox="0 0 14 14"><path d="M7 0.5 L9.1 4.9 L13.7 5.5 L10.3 8.8 L11.2 13.4 L7 11.2 L2.8 13.4 L3.7 8.8 L0.3 5.5 L4.9 4.9 Z" fill="#797b86"/></svg>
<svg class="a" style="left:844.1px;top:383.0px" width="14.6" height="14.6" viewBox="0 0 14 14"><path d="M7 0.5 L9.1 4.9 L13.7 5.5 L10.3 8.8 L11.2 13.4 L7 11.2 L2.8 13.4 L3.7 8.8 L0.3 5.5 L4.9 4.9 Z" fill="#797b86"/></svg>
<svg class="a" style="left:861.1px;top:383.0px" width="14.6" height="14.6" viewBox="0 0 14 14"><path d="M7 0.5 L9.1 4.9 L13.7 5.5 L10.3 8.8 L11.2 13.4 L7 11.2 L2.8 13.4 L3.7 8.8 L0.3 5.5 L4.9 4.9 Z" fill="#797b86"/></svg>
<svg class="a" style="left:878.1px;top:383.0px" width="14.6" height="14.6" viewBox="0 0 14 14"><path d="M7 0.5 L9.1 4.9 L13.7 5.5 L10.3 8.8 L11.2 13.4 L7 11.2 L2.8 13.4 L3.7 8.8 L0.3 5.5 L4.9 4.9 Z" fill="#797b86"/></svg>
<div class="t" style="left:649px;top:406px;">Ability to price to Ensure Margins</div>
<svg class="a" style="left:810.1px;top:406.0px" width="14.6" height="14.6" viewBox="0 0 14 14"><path d="M7 0.5 L9.1 4.9 L13.7 5.5 L10.3 8.8 L11.2 13.4 L7 11.2 L2.8 13.4 L3.7 8.8 L0.3 5.5 L4.9 4.9 Z" fill="#797b86"/></svg>
<svg class="a" style="left:827.1px;top:406.0px" width="14.6" height="14.6" viewBox="0 0 14 14"><path d="M7 0.5 L9.1 4.9 L13.7 5.5 L10.3 8.8 L11.2 13.4 L7 11.2 L2.8 13.4 L3.7 8.8 L0.3 5.5 L4.9 4.9 Z" fill="#797b86"/></svg>
<svg class="a" style="left:844.1px;top:406.0px" width="14.6" height="14.6" viewBox="0 0 14 14"><path d="M7 0.5 L9.1 4.9 L13.7 5.5 L10.3 8.8 L11.2 13.4 L7 11.2 L2.8 13.4 L3.7 8.8 L0.3 5.5 L4.9 4.9 Z" fill="#797b86"/></svg>
<svg class="a" style="left:861.1px;top:406.0px" width="14.6" height="14.6" viewBox="0 0 14 14"><path d="M7 0.5 L9.1 4.9 L13.7 5.5 L10.3 8.8 L11.2 13.4 L7 11.2 L2.8 13.4 L3.7 8.8 L0.3 5.5 L4.9 4.9 Z" fill="#797b86"/></svg>
<svg class="a" style="left:878.1px;top:406.0px" width="14.6" height="14.6" viewBox="0 0 14 14"><path d="M7 0.5 L9.1 4.9 L13.7 5.5 L10.3 8.8 L11.2 13.4 L7 11.2 L2.8 13.4 L3.7 8.8 L0.3 5.5 L4.9 4.9 Z" fill="#797b86"/></svg>
<div class="a" style="left:7px;top:426px;width:892px;height:226px;background:#4a4d5e;border:1px solid #3b3e4c"></div>
<div class="a" style="left:8px;top:446px;width:890px;height:205px;background:#4f5264"></div>
<div class="a" style="left:8px;top:445px;width:890px;height:1px;background:#3b3e4c"></div>
<div class="hd" style="left:9px;top:430px;width:887px;line-height:13px;transform:scaleX(.81)">PROJECTS</div>
<div class="a" style="left:10px;top:448px;width:886px;height:203px;background:#f0f0f0"></div>
<div class="a" style="left:10px;top:448px;width:870px;height:186px;background:#fff"></div>
<div class="a" style="left:10px;top:448px;width:870px;height:22px;background:linear-gradient(#000 0,#000 19.5px,#9a9a9a 20px,#fff 21px)"></div>
<div class="hc" style="left:9px;width:82px"><span class="x">IDENTITY</span></div>
<div class="hc" style="left:91px;width:350px"><span class="x">PROJECT NAME</span></div>
<div class="hc" style="left:441px;width:100px"><span class="x">ACRONYM</span></div>
<div class="hc" style="left:541px;width:100px"><span class="x">AGENCY</span></div>
<div class="hc" style="left:641px;width:80px"><span class="x">RECOMPETE</span></div>
<div class="hc" style="left:721px;width:47px"><span class="x">PRIME</span></div>
<div class="hc" style="left:768px;width:64px"><span class="x">PRIORITY</span></div>
<div class="hc" style="left:832px;width:48px"><span class="x">TCV</span></div>
<div class="a" style="left:10px;top:469px;width:870px;height:165px;overflow:hidden">
<div class="row sel" style="left:0;top:0px;background:#4280b6">
<div class="c" style="left:0px;width:82px"><span class="x">14-00312</span></div>
<div class="c" style="left:82px;width:350px"><span class="x">Information Technology Enterprise Solutions</span></div>
<div class="c" style="left:432px;width:100px"><span class="x">ITES-3S</span></div>
<div class="c" style="left:532px;width:100px"><span class="x">Army Contracting...</span></div>
<div class="c" style="left:632px;width:80px;padding:0"><div class="gc" style="left:33px"></div></div>
<div class="c" style="left:712px;width:47px;padding:0"><div class="gc" style="left:17px"></div></div>
<div class="c" style="left:759px;width:64px;padding:0"><div class="gc" style="left:25px"><svg style="position:absolute;left:0;top:0" width="11" height="11" viewBox="0 0 11 11"><path d="M1.2 5.2L4.3 8.6L10 1.6" fill="none" stroke="#333" stroke-width="1.35"/></svg></div></div>
<div class="c" style="left:823px;width:47px;border-right:0"><span class="x">$5,477,0</span></div>
</div>
<div class="row" style="left:0;top:22px;background:#f0f8ff">
<div class="c" style="left:0px;width:82px"><span class="x">14-00314</span></div>
<div class="c" style="left:82px;width:350px"><span class="x">Logistics Joint Administrative Support Services II</span></div>
<div class="c" style="left:432px;width:100px"><span class="x">FORSCOM-LOG...</span></div>
<div class="c" style="left:532px;width:100px"><span class="x">III Corps</span></div>
<div class="c" style="left:632px;width:80px;padding:0"><div class="gc" style="left:33px"></div></div>
<div class="c" style="left:712px;width:47px;padding:0"><div class="gc" style="left:17px"><svg style="position:absolute;left:0;top:0" width="11" height="11" viewBox="0 0 11 11"><path d="M1.2 5.2L4.3 8.6L10 1.6" fill="none" stroke="#333" stroke-width="1.35"/></svg></div></div>
<div class="c" style="left:759px;width:64px;padding:0"><div class="gc" style="left:25px"></div></div>
<div class="c" style="left:823px;width:47px;border-right:0"><span class="x">$39,000,</span></div>
</div>
<div class="row" style="left:0;top:44px;background:#fff">
<div class="c" style="left:0px;width:82px"><span class="x">14-00315</span></div>
<div class="c" style="left:82px;width:350px"><span class="x">Judge Advocate General Corps Work Management System</span></div>
<div class="c" style="left:432px;width:100px"><span class="x">JAGWMS</span></div>
<div class="c" style="left:532px;width:100px"><span class="x"></span></div>
<div class="c" style="left:632px;width:80px;padding:0"><div class="gc" style="left:33px"></div></div>
<div class="c" style="left:712px;width:47px;padding:0"><div class="gc" style="left:17px"><svg style="position:absolute;left:0;top:0" width="11" height="11" viewBox="0 0 11 11"><path d="M1.2 5.2L4.3 8.6L10 1.6" fill="none" stroke="#333" stroke-width="1.35"/></svg></div></div>
<div class="c" style="left:759px;width:64px;padding:0"><div class="gc" style="left:25px"></div></div>
<div class="c" style="left:823px;width:47px;border-right:0"><span class="x">$34,000,</span></div>
</div>
<div class="row" style="left:0;top:66px;background:#f0f8ff">
<div class="c" style="left:0px;width:82px"><span class="x">15-00001</span></div>
<div class="c" style="left:82px;width:350px"><span class="x">Information Technology Investment Management Consulting Support ...</span></div>
<div class="c" style="left:432px;width:100px"><span class="x">ITIM</span></div>
<div class="c" style="left:532px;width:100px"><span class="x">OFFICE OF THE ...</span></div>
<div class="c" style="left:632px;width:80px;padding:0"><div class="gc" style="left:33px"></div></div>
<div class="c" style="left:712px;width:47px;padding:0"><div class="gc" style="left:17px"></div></div>
<div class="c" style="left:759px;width:64px;padding:0"><div class="gc" style="left:25px"></div></div>
<div class="c" style="left:823px;width:47px;border-right:0"><span class="x">$60,664</span></div>
</div>
<div class="row" style="left:0;top:88px;background:#fff">
<div class="c" style="left:0px;width:82px"><span class="x">15-00002</span></div>
<div class="c" style="left:82px;width:350px"><span class="x">SBA Online Communications Support Services</span></div>
<div class="c" style="left:432px;width:100px"><span class="x"></span></div>
<div class="c" style="left:532px;width:100px"><span class="x">OFFICE OF THE ...</span></div>
<div class="c" style="left:632px;width:80px;padding:0"><div class="gc" style="left:33px"></div></div>
<div class="c" style="left:712px;width:47px;padding:0"><div class="gc" style="left:17px"></div></div>
<div class="c" style="left:759px;width:64px;padding:0"><div class="gc" style="left:25px"></div></div>
<div class="c" style="left:823px;width:47px;border-right:0"><span class="x">$30,000</span></div>
</div>
<div class="row" style="left:0;top:110px;background:#f0f8ff">
<div class="c" style="left:0px;width:82px"><span class="x">15-00003</span></div>
<div class="c" style="left:82px;width:350px"><span class="x">Information Technology Enterprise Solutions</span></div>
<div class="c" style="left:432px;width:100px"><span class="x">ITES-3S</span></div>
<div class="c" style="left:532px;width:100px"><span class="x">Army Contracting...</span></div>
<div class="c" style="left:632px;width:80px;padding:0"><div class="gc" style="left:33px"></div></div>
<div class="c" style="left:712px;width:47px;padding:0"><div class="gc" style="left:17px"></div></div>
<div class="c" style="left:759px;width:64px;padding:0"><div class="gc" style="left:25px"><svg style="position:absolute;left:0;top:0" width="11" height="11" viewBox="0 0 11 11"><path d="M1.2 5.2L4.3 8.6L10 1.6" fill="none" stroke="#333" stroke-width="1.35"/></svg></div></div>
<div class="c" style="left:823px;width:47px;border-right:0"><span class="x">$805,000</span></div>
</div>
<div class="row" style="left:0;top:132px;background:#fff">
<div class="c" style="left:0px;width:82px"><span class="x">15-00004</span></div>
<div class="c" style="left:82px;width:350px"><span class="x">Information Technology Enterprise Solutions</span></div>
<div class="c" style="left:432px;width:100px"><span class="x">ITES-3S</span></div>
<div class="c" style="left:532px;width:100px"><span class="x">Army Contracting...</span></div>
<div class="c" style="left:632px;width:80px;padding:0"><div class="gc" style="left:33px"></div></div>
<div class="c" style="left:712px;width:47px;padding:0"><div class="gc" style="left:17px"></div></div>
<div class="c" style="left:759px;width:64px;padding:0"><div class="gc" style="left:25px"><svg style="position:absolute;left:0;top:0" width="11" height="11" viewBox="0 0 11 11"><path d="M1.2 5.2L4.3 8.6L10 1.6" fill="none" stroke="#333" stroke-width="1.35"/></svg></div></div>
<div class="c" style="left:823px;width:47px;border-right:0"><span class="x">$98,125,</span></div>
</div>
<div class="row" style="left:0;top:154px;background:#f0f8ff">
<div class="c" style="left:0px;width:82px"><span class="x">15-00005</span></div>
<div class="c" style="left:82px;width:350px"><span class="x">Information Technology Enterprise Solution</span></div>
<div class="c" style="left:432px;width:100px"><span class="x">ITES-3S</span></div>
<div class="c" style="left:532px;width:100px"><span class="x">Army Contracting...</span></div>
<div class="c" style="left:632px;width:80px;padding:0"><div class="gc" style="left:33px"></div></div>
<div class="c" style="left:712px;width:47px;padding:0"><div class="gc" style="left:17px"></div></div>
<div class="c" style="left:759px;width:64px;padding:0"><div class="gc" style="left:25px"><svg style="position:absolute;left:0;top:0" width="11" height="11" viewBox="0 0 11 11"><path d="M1.2 5.2L4.3 8.6L10 1.6" fill="none" stroke="#333" stroke-width="1.35"/></svg></div></div>
<div class="c" style="left:823px;width:47px;border-right:0"><span class="x">$65,800,</span></div>
</div>
</div>
<div class="a" style="left:10px;top:469px;width:1px;height:165px;background:#a6a6a6"></div>
<div class="a" style="left:880px;top:448px;width:16px;height:186px;background:#f0f0f0"></div>
<div class="a" style="left:881px;top:466px;width:14px;height:70px;background:#c9c9c9"></div>
<svg class="a" style="left:884px;top:455px" width="8" height="6" viewBox="0 0 8 6"><path d="M1 5L4 1.5L7 5" fill="none" stroke="#505050" stroke-width="1.6"/></svg>
<svg class="a" style="left:884px;top:623px" width="8" height="6" viewBox="0 0 8 6"><path d="M1 1L4 4.5L7 1" fill="none" stroke="#505050" stroke-width="1.6"/></svg>
<div class="a" style="left:10px;top:634px;width:886px;height:17px;background:#f0f0f0"></div>
<div class="a" style="left:27px;top:635px;width:276px;height:15px;background:#c9c9c9"></div>
<svg class="a" style="left:15px;top:638px" width="6" height="9" viewBox="0 0 6 9"><path d="M5 1L1.5 4.5L5 8" fill="none" stroke="#505050" stroke-width="1.6"/></svg>
<svg class="a" style="left:868px;top:638px" width="6" height="9" viewBox="0 0 6 9"><path d="M1 1L4.5 4.5L1 8" fill="none" stroke="#505050" stroke-width="1.6"/></svg>
<div class="a" style="left:0;top:29px;width:5px;height:626px;background:linear-gradient(90deg,#23252f 0,#23252f 1px,#46484f 1px,#46484f 3px,#1e1e22 3px)"></div>
<div class="a" style="left:902px;top:29px;width:5px;height:626px;background:linear-gradient(90deg,#1e1e22 0,#1e1e22 1px,#46484f 1px,#46484f 4px,#23252f 4px)"></div>
<div class="a" style="left:5px;top:652px;width:897px;height:3px;background:#232327"></div>
<div class="a" style="left:0;top:655px;width:907px;height:24px;background:linear-gradient(#3a3b44 0,#2d2e36 1.5px,#1d1e23 8px,#0f0f12 14px,#08080a 100%);border-radius:0 0 4px 4px"></div>
<div class="t sl" style="left:7px;top:661px">Projects:</div>
<div class="t sb" style="left:58px;top:661px;color:#f4f41a">18.00</div>
<div class="t sl" style="left:96px;top:661px">Users:</div>
<div class="t sb" style="left:136px;top:661px;color:#1ee6f0">18.00</div>
<div class="t sl" style="left:174px;top:661px">TCV:</div>
<div class="t sb" style="left:208px;top:661px;color:#18e418">$2,420,215,328</div>
<div class="t sl" style="left:300px;top:661px">NCV:</div>
<div class="t sb" style="left:336px;top:661px;color:#f47a10">$461,777,200</div>
<div class="t sl" style="left:419px;top:661px">Adjected TCV:</div>
<div class="t sb" style="left:495px;top:661px;color:#c010c8">$806,601,600</div>
<div class="t sl" style="left:578px;top:661px">Adjusted NCV</div>
<div class="t sb" style="left:651px;top:661px;color:#f44a10">$582,724,280</div>
<svg class="a" style="left:890px;top:664px" width="12" height="12" viewBox="0 0 12 12"><g fill="#777"><rect x="8" y="0" width="2" height="2"/><rect x="4" y="4" width="2" height="2"/><rect x="8" y="4" width="2" height="2"/><rect x="0" y="8" width="2" height="2"/><rect x="4" y="8" width="2" height="2"/><rect x="8" y="8" width="2" height="2"/></g></svg>
</body></html>
